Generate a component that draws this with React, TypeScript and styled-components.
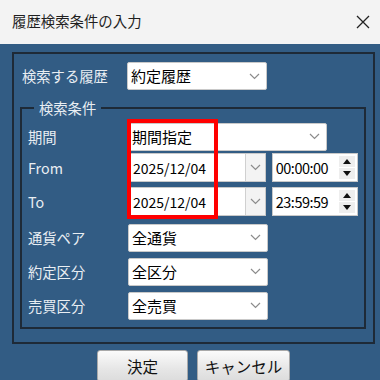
import React from "react";
import styled, { createGlobalStyle } from "styled-components";

const GlobalStyle = createGlobalStyle`
  html, body {
    margin: 0;
    padding: 0;
    background: #325c84;
  }
  body {
    font-family: "Noto Sans CJK JP", "Noto Sans", sans-serif;
  }
`;

const Chevron = () => (
  <svg width="11" height="7" viewBox="0 0 11 7">
    <path d="M1 1 L5.5 5.5 L10 1" fill="none" stroke="#8c8c8c" strokeWidth="1.2" />
  </svg>
);

interface SelectBoxProps {
  value: string;
  width: number;
}

const SelectBox: React.FC<SelectBoxProps> = ({ value, width }) => (
  <StyledSelect style={{ width }}>
    <span>{value}</span>
    <Chevron />
  </StyledSelect>
);

const DateBox: React.FC<{ value: string }> = ({ value }) => (
  <StyledDateCombo>
    <StyledDateText>{value}</StyledDateText>
    <StyledDropButton>
      <Chevron />
    </StyledDropButton>
  </StyledDateCombo>
);

const TimeBox: React.FC<{ value: string }> = ({ value }) => (
  <StyledTime>
    <StyledTimeText>{value}</StyledTimeText>
    <StyledSpinner>
      <StyledSpinHalf>
        <svg width="8" height="5" viewBox="0 0 8 5">
          <path d="M0 5 L4 0 L8 5 Z" fill="#111" />
        </svg>
      </StyledSpinHalf>
      <StyledSpinHalf>
        <svg width="8" height="5" viewBox="0 0 8 5">
          <path d="M0 0 L4 5 L8 0 Z" fill="#111" />
        </svg>
      </StyledSpinHalf>
    </StyledSpinner>
  </StyledTime>
);

const App: React.FC = () => {
  return (
    <>
      <GlobalStyle />
      <StyledWindow>
        <StyledTitleBar>
          <StyledTitle>履歴検索条件の入力</StyledTitle>
          <svg width="14" height="14" viewBox="0 0 14 14">
            <path d="M1 1 L13 13 M13 1 L1 13" stroke="#222" strokeWidth="1.3" />
          </svg>
        </StyledTitleBar>

        <StyledBody>
          <StyledOuterBox>
            <StyledTopRow>
              <StyledLabel $width={105}>検索する履歴</StyledLabel>
              <SelectBox value="約定履歴" width={140} />
            </StyledTopRow>

            <StyledGroup>
              <StyledLegend>検索条件</StyledLegend>
              <StyledPeriod>
                <StyledRow $mt={0}>
                  <StyledLabel $width={100}>期間</StyledLabel>
                  <SelectBox value="期間指定" width={199} />
                </StyledRow>
                <StyledRow $mt={2}>
                  <StyledLabel $width={100}>From</StyledLabel>
                  <DateBox value="2025/12/04" />
                  <TimeBox value="00:00:00" />
                </StyledRow>
                <StyledRow $mt={5}>
                  <StyledLabel $width={100}>To</StyledLabel>
                  <DateBox value="2025/12/04" />
                  <TimeBox value="23:59:59" />
                </StyledRow>
                <StyledHighlight />
              </StyledPeriod>
              <StyledRow $mt={7}>
                <StyledLabel $width={100}>通貨ペア</StyledLabel>
                <SelectBox value="全通貨" width={140} />
              </StyledRow>
              <StyledRow $mt={5}>
                <StyledLabel $width={100}>約定区分</StyledLabel>
                <SelectBox value="全区分" width={140} />
              </StyledRow>
              <StyledRow $mt={5}>
                <StyledLabel $width={100}>売買区分</StyledLabel>
                <SelectBox value="全売買" width={140} />
              </StyledRow>
            </StyledGroup>
          </StyledOuterBox>

          <StyledButtons>
            <StyledButton $width={91}>決定</StyledButton>
            <StyledButton $width={93}>キャンセル</StyledButton>
          </StyledButtons>
        </StyledBody>
      </StyledWindow>
    </>
  );
};

export default App;

const StyledWindow = styled.div`
  width: 380px;
  height: 380px;
  overflow: hidden;
  background: #325c84;
  display: flex;
  flex-direction: column;
`;

const StyledTitleBar = styled.div`
  height: 44px;
  flex-shrink: 0;
  background: #f3f3f3;
  display: flex;
  align-items: center;
  justify-content: space-between;
  padding: 0 10px 0 12px;
  box-sizing: border-box;
`;

const StyledTitle = styled.div`
  font-size: 14.4px;
  color: #1f1f1f;
  line-height: 20px;
  padding-bottom: 2px;
`;

const StyledBody = styled.div`
  padding: 8px 5px 0 12px;
`;

const StyledOuterBox = styled.div`
  border: 2px solid #1e2a37;
  padding: 8px 7px 13px 6px;
`;

const StyledTopRow = styled.div`
  display: flex;
  align-items: center;
  height: 28px;
  padding-left: 2px;
`;

const StyledLabel = styled.div<{ $width: number }>`
  width: ${(p) => p.$width}px;
  flex-shrink: 0;
  color: #e9eef3;
  font-size: 14.3px;
  line-height: 20px;
`;

const StyledSelect = styled.div`
  height: 28px;
  box-sizing: border-box;
  background: #fff;
  border: 1px solid #c9c9c9;
  border-radius: 2px;
  display: flex;
  align-items: center;
  justify-content: space-between;
  padding: 0 6px 0 3px;
  font-size: 15px;
  color: #000;
  line-height: 20px;
`;

const StyledGroup = styled.fieldset`
  margin: 8px 0 0 0;
  border: 2px solid #1e2a37;
  padding: 4px 6px 7px 6px;
  min-width: 0;
`;

const StyledLegend = styled.legend`
  color: #e9eef3;
  font-size: 14.3px;
  line-height: 20px;
  padding: 0 5px;
  margin-left: 6px;
`;

const StyledPeriod = styled.div`
  position: relative;
`;

const StyledRow = styled.div<{ $mt: number }>`
  display: flex;
  align-items: center;
  height: 29px;
  margin-top: ${(p) => p.$mt}px;
`;

const StyledDateCombo = styled.div`
  width: 139px;
  height: 29px;
  box-sizing: border-box;
  background: #fff;
  border: 1px solid #c9c9c9;
  display: flex;
  align-items: stretch;
`;

const StyledDateText = styled.div`
  flex: 1;
  display: flex;
  align-items: center;
  padding-left: 4px;
  font-size: 14px;
  color: #000;
`;

const StyledDropButton = styled.div`
  width: 19px;
  background: #f3f3f3;
  border-left: 1px solid #d0d0d0;
  display: flex;
  align-items: center;
  justify-content: center;
`;

const StyledTime = styled.div`
  width: 87px;
  height: 29px;
  margin-left: 6px;
  box-sizing: border-box;
  background: #fff;
  border: 1px solid #c9c9c9;
  display: flex;
  align-items: stretch;
  padding: 2px 2px 2px 0;
`;

const StyledTimeText = styled.div`
  flex: 1;
  display: flex;
  align-items: center;
  padding-left: 3px;
  font-size: 14.5px;
  letter-spacing: -0.5px;
  color: #000;
`;

const StyledSpinner = styled.div`
  width: 16px;
  display: flex;
  flex-direction: column;
  gap: 1px;
`;

const StyledSpinHalf = styled.div`
  flex: 1;
  background: #eeeeee;
  display: flex;
  align-items: center;
  justify-content: center;
`;

const StyledHighlight = styled.div`
  position: absolute;
  left: 99px;
  top: -3px;
  width: 91px;
  height: 100px;
  box-sizing: border-box;
  border: 4px solid #ff0000;
  pointer-events: none;
`;

const StyledButtons = styled.div`
  display: flex;
  justify-content: center;
  gap: 9px;
  margin-top: 6px;
`;

const StyledButton = styled.div<{ $width: number }>`
  width: ${(p) => p.$width}px;
  height: 32px;
  box-sizing: border-box;
  border: 1px solid #a9a9a9;
  border-radius: 3px;
  background: linear-gradient(#fbfbfb, #e6e6e6 60%, #dcdcdc);
  display: flex;
  align-items: center;
  justify-content: center;
  font-size: 15.5px;
  color: #111;
`;
